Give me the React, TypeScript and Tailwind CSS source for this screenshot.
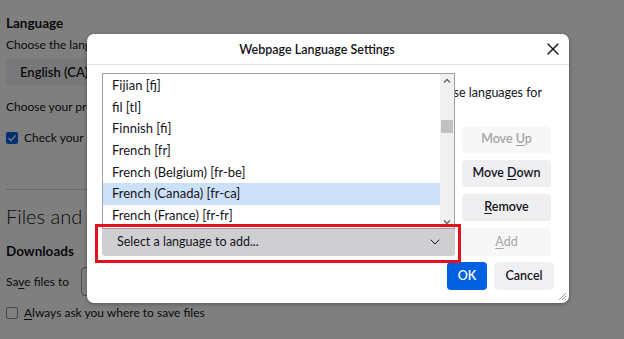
import React from 'react';
import { ChevronDown, X } from 'lucide-react';

const languages = [
    'Fijian [fj]',
    'fil [tl]',
    'Finnish [fi]',
    'French [fr]',
    'French (Belgium) [fr-be]',
    'French (Canada) [fr-ca]',
    'French (France) [fr-fr]',
];

const SELECTED = 'French (Canada) [fr-ca]';

const Key = ({ children }: { children: React.ReactNode }) => (
    <span className="underline underline-offset-2">{children}</span>
);

const SideButton = ({
    children,
    disabled,
}: {
    children: React.ReactNode;
    disabled?: boolean;
}) => (
    <button
        className={
            disabled
                ? 'h-[27px] w-[89px] rounded-[4px] bg-[#f7f7f8] text-[12.5px] font-semibold text-[#a5a5a8]'
                : 'h-[27px] w-[89px] rounded-[4px] bg-[#efeff1] text-[12.5px] font-semibold text-[#15141a]'
        }
    >
        {children}
    </button>
);

const Checkbox = ({ checked }: { checked?: boolean }) => (
    <span
        className={
            checked
                ? 'flex h-[12px] w-[12px] items-center justify-center rounded-[2px] bg-[#0061e0]'
                : 'h-[12px] w-[12px] rounded-[2px] border border-[#8f8f9d] bg-white'
        }
    >
        {checked && (
            <svg width="10" height="10" viewBox="0 0 10 10">
                <path d="M1.5 5.2 4 7.6 8.6 2.4" fill="none" stroke="white" strokeWidth="1.4" />
            </svg>
        )}
    </span>
);

// settings page sitting behind the modal
const SettingsPage = () => (
    <div className="px-[6px] pt-[13px] text-[12px] text-[#15141a]">
        <h2 className="text-[13.5px] font-bold leading-[20px]">Language</h2>
        <p className="mt-[3px] leading-[18px] whitespace-nowrap">
            Choose the languages used to display menus, messages, and notifications from Firefox.
        </p>
        <div className="mt-[5px] flex h-[27px] w-[140px] items-center rounded-[4px] bg-[#f0f0f4] pl-[14px] text-[13px] font-semibold">
            English (CA)
        </div>
        <p className="mt-[12px] leading-[18px] whitespace-nowrap">
            Choose your preferred language for displaying pages
        </p>
        <div className="mt-[13px] flex items-center gap-[6px] leading-[18px] whitespace-nowrap">
            <Checkbox checked />
            Check your spelling as you type
        </div>
        <div className="mt-[42px] h-px w-[400px] bg-[#d7d7db]" />
        <h1 className="mt-[13px] text-[20px] font-light leading-[26px] text-[#15141a]">
            Files and Applications
        </h1>
        <h2 className="mt-[12px] text-[13.5px] font-bold leading-[20px]">Downloads</h2>
        <div className="mt-[6px] flex items-center gap-[12px] whitespace-nowrap">
            <span>
                Sa<Key>v</Key>e files to
            </span>
            <div className="h-[29px] w-[200px] rounded-[4px] border border-[#8f8f9d] bg-white" />
        </div>
        <div className="mt-[8px] flex items-center gap-[6px] leading-[18px] whitespace-nowrap">
            <Checkbox />
            <span>
                <Key>A</Key>lways ask you where to save files
            </span>
        </div>
    </div>
);

const LanguagePopup = () => (
    <div className="absolute left-[15px] top-[39px] flex h-[156px] w-[353px] border border-[#a0a0a0] bg-white">
        <ul className="flex-1 pt-px">
            {languages.map((lang) => (
                <li
                    key={lang}
                    className={
                        lang === SELECTED
                            ? 'flex h-[21.67px] items-center bg-[#cce0f7] pl-[9px]'
                            : 'flex h-[21.67px] items-center pl-[9px]'
                    }
                >
                    {lang}
                </li>
            ))}
        </ul>
        <div className="flex w-[14px] flex-col items-center bg-[#f0f0f0]">
            <svg width="8" height="6" viewBox="0 0 8 6" className="mt-[4px]">
                <path d="M1 4.5 4 1.5 7 4.5" fill="none" stroke="#606060" strokeWidth="1.3" />
            </svg>
            <div className="mt-[36px] h-[13px] w-[12px] bg-[#c1c1c1]" />
            <svg width="8" height="6" viewBox="0 0 8 6" className="mt-auto mb-[3px]">
                <path d="M1 1.5 4 4.5 7 1.5" fill="none" stroke="#606060" strokeWidth="1.3" />
            </svg>
        </div>
    </div>
);

const LanguageDialog = () => (
    <div className="absolute left-[87px] top-[34px] h-[269px] w-[482px] rounded-[7px] bg-white text-[13px] text-[#15141a] shadow-[0_1px_4px_rgba(0,0,0,0.35)]">
        <div className="flex h-[31px] items-center border-b border-[#e0e0e0]">
            <div className="w-[460px] pt-[2px] text-center text-[12.5px] font-semibold">
                Webpage Language Settings
            </div>
            <X size={20} strokeWidth={1.6} className="-ml-[4px]" />
        </div>

        <div className="px-[15px] pt-[19px]">
            <div className="flex w-[440px] justify-end overflow-hidden text-[12.5px] leading-[17px]">
                <span className="whitespace-nowrap">
                    Web pages are sometimes offered in more than one language. Choose these languages for
                </span>
            </div>
            <p className="leading-[17px]">displaying web pages, in order of preference</p>

            <div className="mt-[8px] flex gap-[7px]">
                <div className="h-[96px] w-[353px] border border-[#8f8f9d]" />
                <div className="flex flex-col gap-[7px]">
                    <SideButton disabled>
                        Move <Key>U</Key>p
                    </SideButton>
                    <SideButton>
                        Move <Key>D</Key>own
                    </SideButton>
                    <SideButton>
                        <Key>R</Key>emove
                    </SideButton>
                </div>
            </div>

            <div className="mt-[6px] flex gap-[7px]">
                <div className="flex h-[28px] w-[353px] items-center justify-between rounded-[3px] bg-[#cfcfd1] pl-[15px] pr-[12px] text-[12.5px]">
                    <span>Select a language to add...</span>
                    <ChevronDown size={16} strokeWidth={1.5} />
                </div>
                <button className="h-[28px] w-[89px] rounded-[4px] bg-[#f7f7f8] text-[12.5px] text-[#a5a5a8]">
                    <Key>A</Key>dd
                </button>
            </div>

            <div className="mt-[6px] flex justify-end gap-[7px]">
                <button className="h-[28px] w-[40px] rounded-[4px] bg-[#0061e0] text-[12.5px] font-semibold text-white">
                    OK
                </button>
                <button className="h-[28px] w-[60px] rounded-[4px] bg-[#f0f0f4] text-[12.5px] font-semibold">
                    Cancel
                </button>
            </div>
        </div>

        <LanguagePopup />

        {/* annotation frame around the language picker */}
        <div className="absolute left-[8px] top-[190px] h-[39px] w-[366px] border-[3px] border-[#e3101e]" />

        <svg width="10" height="10" viewBox="0 0 10 10" className="absolute bottom-[2px] right-[2px]">
            <path d="M9 2 2 9M9 5 5 9M9 8 8 9" stroke="#9a9a9a" strokeWidth="1" />
        </svg>
    </div>
);

export default function App() {
    return (
        <div className="relative h-[339px] w-[624px] overflow-hidden bg-white font-['Lato',sans-serif]">
            <SettingsPage />
            <div className="absolute inset-0 bg-black/50" />
            <LanguageDialog />
        </div>
    );
}
